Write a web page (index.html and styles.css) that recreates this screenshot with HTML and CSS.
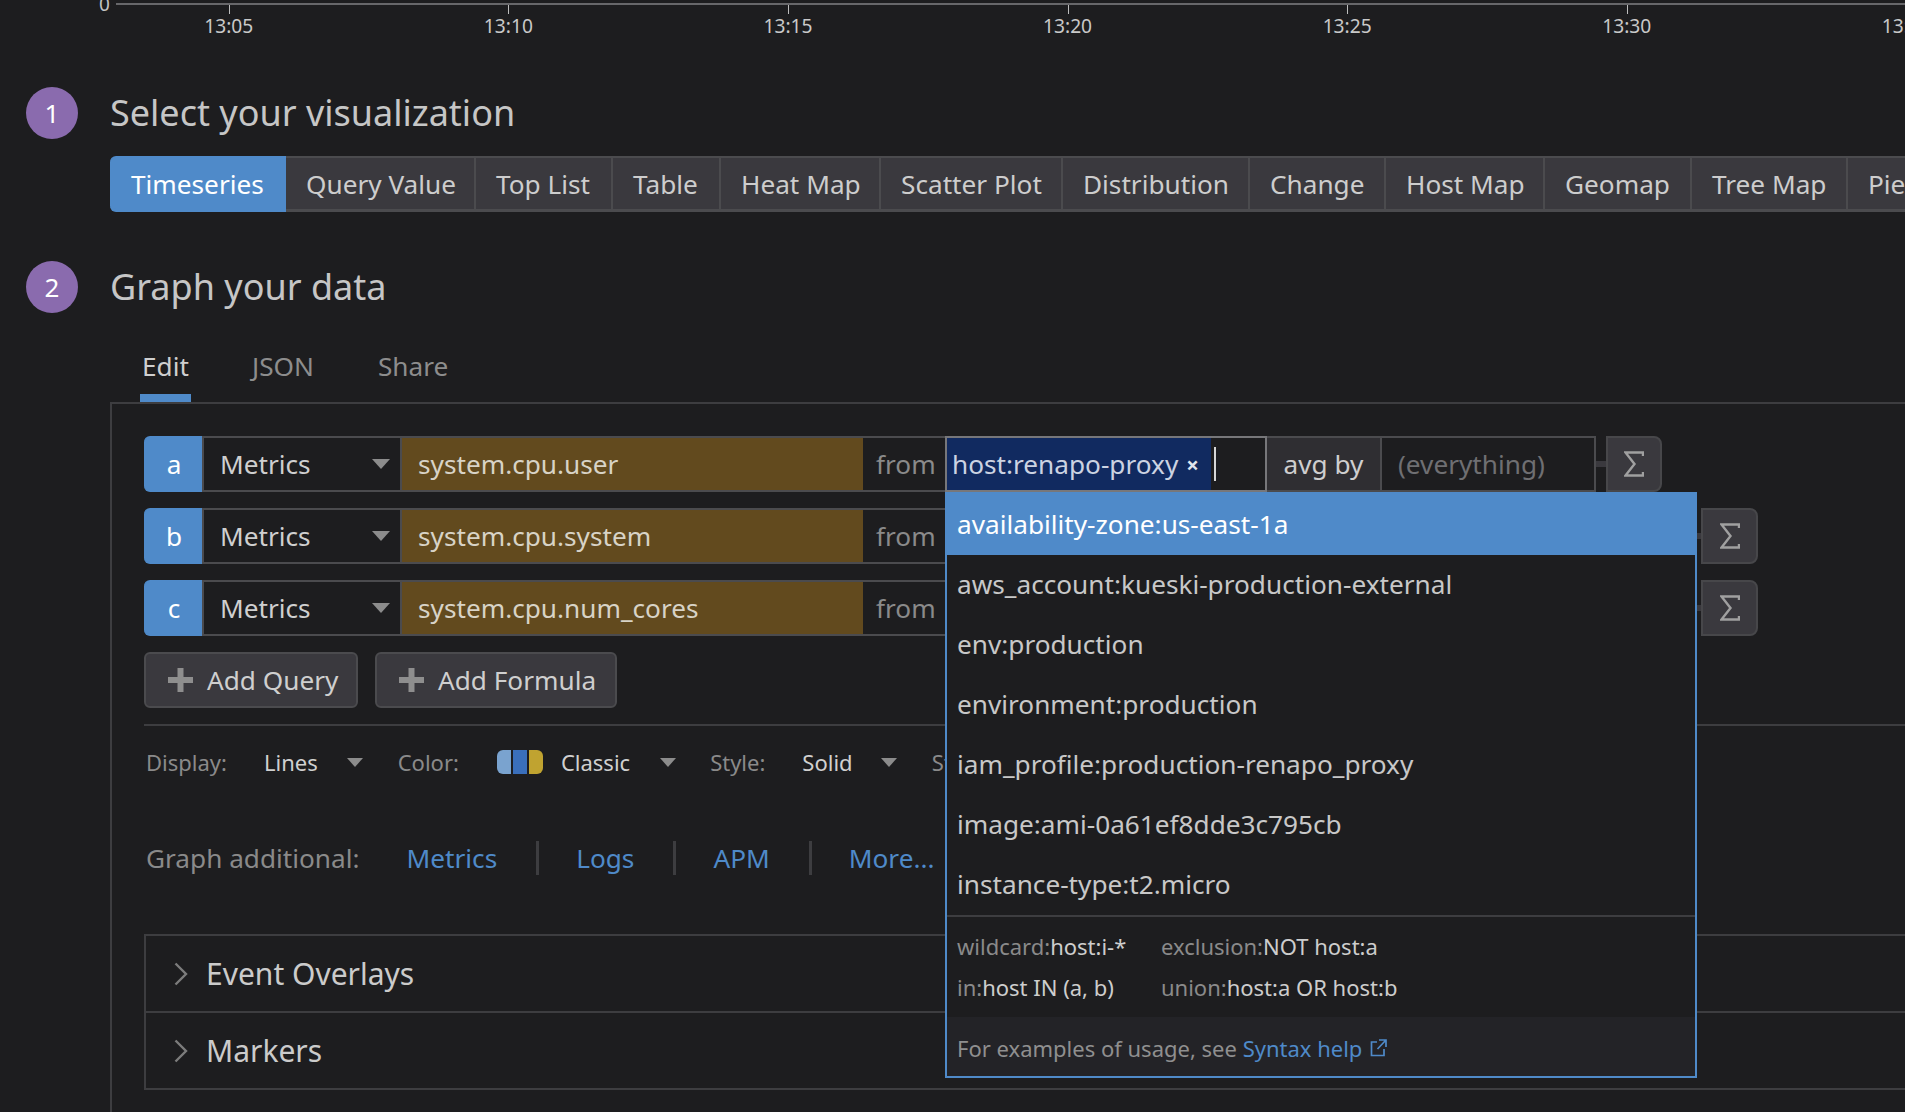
FILE: index.html
```html
<!DOCTYPE html>
<html lang="en">
<head>
<meta charset="utf-8">
<title>Graph editor</title>
<link rel="stylesheet" href="styles.css">
</head>
<body>
<svg class="defs" width="0" height="0" aria-hidden="true">
  <symbol id="sigma" viewBox="0 0 20 26"><path d="M19 5V1.5H1.5L10.5 13L1.5 24.5H19V21" fill="none" stroke="currentColor" stroke-width="2.4"/></symbol>
  <symbol id="plus" viewBox="0 0 25 24"><path d="M9.5 0h6v9h9.500v6h-9.500v9h-6v-9H0V9h9.500z" fill="currentColor"/></symbol>
  <symbol id="chev" viewBox="0 0 14 24"><path d="M1.500 1.500L12 12L1.500 22.500" fill="none" stroke="currentColor" stroke-width="2.400"/></symbol>
  <symbol id="ext" viewBox="0 0 17 18"><path d="M7 3H1.500V16.500H14V10M9 1H16V8M16 1L7.500 10" fill="none" stroke="currentColor" stroke-width="1.700"/></symbol>
</svg>

<div class="axis">
  <span class="axis-zero">0</span>
  <div class="axis-line"></div>
  <div class="ticks">
    <div class="tick">13:05</div>
    <div class="tick">13:10</div>
    <div class="tick">13:15</div>
    <div class="tick">13:20</div>
    <div class="tick">13:25</div>
    <div class="tick">13:30</div>
    <div class="tick">13:35</div>
  </div>
</div>

<section class="step step-viz">
  <div class="step-num">1</div>
  <h2 class="step-title">Select your visualization</h2>
</section>
<div class="viz-tabs">
  <div class="viz-tab viz-active w1">Timeseries</div>
  <div class="viz-tab w2">Query Value</div>
  <div class="viz-tab w3">Top List</div>
  <div class="viz-tab w4">Table</div>
  <div class="viz-tab w5">Heat Map</div>
  <div class="viz-tab w6">Scatter Plot</div>
  <div class="viz-tab w7">Distribution</div>
  <div class="viz-tab w8">Change</div>
  <div class="viz-tab w9">Host Map</div>
  <div class="viz-tab w10">Geomap</div>
  <div class="viz-tab w11">Tree Map</div>
  <div class="viz-tab w12">Pie Chart</div>
</div>

<section class="step step-graph">
  <div class="step-num">2</div>
  <h2 class="step-title">Graph your data</h2>
</section>
<nav class="edit-tabs">
  <div class="edit-tab edit-active">Edit</div>
  <div class="edit-tab">JSON</div>
  <div class="edit-tab edit-share">Share</div>
</nav>

<main class="panel">
  <div class="q-row">
    <div class="q-chip">a</div>
    <div class="q-select">Metrics<i class="caret"></i></div>
    <div class="q-metric">system.cpu.user</div>
    <div class="q-from">from</div>
    <div class="q-filter">
      <span class="tag">host:renapo-proxy<b class="tag-x">×</b></span>
      <span class="cursor"></span>
    </div>
    <div class="q-avg">avg by</div>
    <div class="q-every">(everything)</div>
    <div class="q-link"></div>
    <div class="q-sigma"><svg class="sigma-ic"><use href="#sigma"/></svg></div>
  </div>
  <div class="q-row">
    <div class="q-chip">b</div>
    <div class="q-select">Metrics<i class="caret"></i></div>
    <div class="q-metric">system.cpu.system</div>
    <div class="q-from">from</div>
    <div class="q-hidden"></div>
    <div class="q-link q-link-short"></div>
    <div class="q-sigma q-sigma-wide"><svg class="sigma-ic"><use href="#sigma"/></svg></div>
  </div>
  <div class="q-row">
    <div class="q-chip">c</div>
    <div class="q-select">Metrics<i class="caret"></i></div>
    <div class="q-metric">system.cpu.num_cores</div>
    <div class="q-from">from</div>
    <div class="q-hidden"></div>
    <div class="q-link q-link-short"></div>
    <div class="q-sigma q-sigma-wide"><svg class="sigma-ic"><use href="#sigma"/></svg></div>
  </div>

  <div class="add-row">
    <button class="add-btn add-query"><svg class="plus-ic"><use href="#plus"/></svg>Add Query</button>
    <button class="add-btn add-formula"><svg class="plus-ic"><use href="#plus"/></svg>Add Formula</button>
  </div>

  <div class="display-row">
    <span class="d-label d-display">Display:</span>
    <span class="d-value d-lines">Lines</span><i class="caret caret-sm c-lines"></i>
    <span class="d-label d-color">Color:</span>
    <span class="swatch"><i class="sw1"></i><i class="sw2"></i><i class="sw3"></i></span>
    <span class="d-value d-classic">Classic</span><i class="caret caret-sm c-classic"></i>
    <span class="d-label d-style">Style:</span>
    <span class="d-value d-solid">Solid</span><i class="caret caret-sm c-solid"></i>
    <span class="d-label d-stroke">Stroke:</span>
  </div>

  <div class="additional">
    <span class="add-label">Graph additional:</span>
    <a class="add-link l-metrics">Metrics</a><i class="add-sep"></i>
    <a class="add-link l-logs">Logs</a><i class="add-sep"></i>
    <a class="add-link l-apm">APM</a><i class="add-sep"></i>
    <a class="add-link l-more">More...</a>
  </div>

  <div class="collapse">
    <div class="c-row"><svg class="chev-ic"><use href="#chev"/></svg>Event Overlays</div>
    <div class="c-row"><svg class="chev-ic"><use href="#chev"/></svg>Markers</div>
  </div>

  <div class="dropdown">
    <div class="dd-item dd-active">availability-zone:us-east-1a</div>
    <div class="dd-item">aws_account:kueski-production-external</div>
    <div class="dd-item">env:production</div>
    <div class="dd-item">environment:production</div>
    <div class="dd-item">iam_profile:production-renapo_proxy</div>
    <div class="dd-item">image:ami-0a61ef8dde3c795cb</div>
    <div class="dd-item">instance-type:t2.micro</div>
    <div class="dd-hints">
      <div class="hint"><span>wildcard:</span>host:i-*</div>
      <div class="hint"><span>exclusion:</span>NOT host:a</div>
      <div class="hint"><span>in:</span>host IN (a, b)</div>
      <div class="hint"><span>union:</span>host:a OR host:b</div>
    </div>
    <div class="dd-foot">For examples of usage, see <a class="dd-link">Syntax help</a><svg class="ext-ic"><use href="#ext"/></svg></div>
  </div>
</main>
</body>
</html>
```

FILE: styles.css
```css
* { box-sizing: border-box; }
html, body { margin: 0; width: 1905px; height: 1112px; overflow: hidden; }
body { background: #1d1d1f; color: #cfcfcf; font-family: "Noto Sans", "Open Sans", sans-serif; font-size: 26.200px; }
.defs { position: absolute; }

/* axis */
.axis { position: relative; height: 87px; padding-top: 3px; }
.axis-zero { position: absolute; left: 99px; top: -8px; font-size: 19px; line-height: 24px; color: #c4c4c4; }
.axis-line { margin-left: 116px; height: 2px; background: #67676a; }
.ticks { display: flex; padding-left: 89px; width: 2100px; }
.tick { position: relative; flex: 0 0 279.6px; text-align: center; font-size: 19.200px; line-height: 26px; padding-top: 8px; color: #c9c9c9; }
.tick::before { content: ""; position: absolute; left: 50%; top: 0; width: 1px; height: 9px; background: #bdbdbd; }

/* steps */
.step { display: flex; align-items: center; gap: 32px; padding-left: 26px; height: 52px; }
.step-graph { margin-top: 49px; }
.step-num { width: 52px; height: 52px; border-radius: 50%; background: #8a6bae; color: #fff; display: flex; align-items: center; justify-content: center; font-size: 26px; }
.step-title { margin: 0; padding-bottom: 2px; font-size: 36px; font-weight: 400; color: #c6c6c6; }

/* viz tabs */
.viz-tabs { display: flex; margin: 17px 0 0 110px; width: 1900px; height: 56px; }
.viz-tab { flex: none; background: #3a393e; border: solid #4b4b4e; border-width: 2px 2px 3px 0; display: flex; align-items: center; padding-left: 20px; color: #cdcdcd; white-space: nowrap; }
.viz-active { background: #4f8ac9; border-color: #4f8ac9; border-radius: 6px 0 0 6px; color: #fff; padding-left: 21px; }
.w1 { width: 176px; } .w2 { width: 190px; } .w3 { width: 137px; } .w4 { width: 108px; } .w5 { width: 160px; } .w6 { width: 182px; }
.w7 { width: 187px; } .w8 { width: 136px; } .w9 { width: 159px; } .w10 { width: 147px; } .w11 { width: 156px; } .w12 { width: 160px; }

/* edit tabs */
.edit-tabs { display: flex; gap: 61px; margin: 26px 0 0 140px; height: 63px; }
.edit-tab { flex: none; min-width: 51px; padding-top: 9px; height: 62px; text-align: center; color: #8d8d8d; white-space: nowrap; }
.edit-active { color: #cfcfcf; border-bottom: 8px solid #4f8ac9; height: 63px; }
.edit-share { margin-left: 3px; }

/* panel */
.panel { position: relative; margin-left: 110px; width: 1900px; height: 720px; border: solid #3d3d40; border-width: 2px 0 0 2px; padding: 32px 0 0 32px; }

.q-row { display: flex; height: 56px; margin-bottom: 16px; }
.q-row > div { flex: none; display: flex; align-items: center; white-space: nowrap; border: solid #4b4b4e; border-width: 2px 0; }
.q-chip { width: 58px; justify-content: center; padding-left: 2px; background: #4f8ac9; border-color: #4f8ac9 !important; border-radius: 6px 0 0 6px; color: #fff; }
.q-select { position: relative; width: 200px; padding-left: 16px; border-left-width: 2px !important; border-right-width: 2px !important; }
.caret { position: absolute; right: 10px; top: 50%; margin-top: -5px; width: 0; height: 0; border: solid transparent; border-width: 10px 9px 0; border-top-color: #8c8c8c; }
.q-metric { width: 461px; padding-left: 16px; background: #624a1e; color: #d8d3c6; }
.q-from { width: 82px; padding-left: 13px; color: #8a8a8a; }
.q-filter { width: 322px; border: 2px solid #77777a !important; padding: 0; gap: 4px; }
.tag { display: flex; align-items: center; align-self: stretch; width: 264px; padding-left: 5px; background: #112a60; color: #ccd3e2; }
.tag-x { font-weight: 700; font-size: 22px; margin-left: 8px; color: #e0e4ee; }
.cursor { width: 2px; height: 34px; background: #d6d6d6; margin-left: -1px; }
.q-avg { width: 113px; justify-content: center; background: #2f2e32; border-left: 0 !important; color: #cfcfcf; }
.q-every { width: 216px; padding-left: 16px; border-left-width: 2px !important; border-right-width: 2px !important; color: #6f6f72; }
.q-link { width: 10px; border: 0 !important; position: relative; }
.q-link::before { content: ""; display: block; width: 100%; height: 6px; background: #3a393e; }
.q-hidden { width: 751px; }
.q-link-short { width: 5px; }
.q-sigma { width: 56px; justify-content: center; background: #3a393e; border: 2px solid #47474a !important; border-radius: 0 8px 8px 0; color: #a0a0a0; }
.q-sigma-wide { width: 57px; }
.sigma-ic { width: 20px; height: 26px; }

/* add buttons */
.add-row { display: flex; gap: 17px; height: 56px; }
.add-btn { display: flex; align-items: center; background: #3a393e; border: 2px solid #4b4b4e; border-radius: 6px; color: #cfcfcf; font: inherit; padding: 0 0 0 22px; gap: 14px; }
.add-query { width: 214px; }
.add-formula { width: 242px; }
.plus-ic { width: 25px; height: 24px; color: #8e8e8e; }

/* display row */
.display-row { display: flex; align-items: center; margin-top: 16px; padding: 0 0 2px 2px; border-top: 2px solid #3d3d40; height: 76px; font-size: 22px; position: relative; }
.d-label { color: #8a8a8a; flex: none; }
.d-value { color: #d0d0d0; flex: none; }
.caret-sm { position: static; margin: 0; flex: none; border-width: 9px 8px 0; }
.d-lines { margin-left: 37px; }
.c-lines { margin-left: 29px; }
.d-color { margin-left: 35px; }
.swatch { display: flex; gap: 2px; margin-left: 38px; width: 46px; height: 24px; border-radius: 6px; overflow: hidden; flex: none; }
.swatch i { flex: 1; }
.sw1 { background: #7aa3cf; } .sw2 { background: #3a6fbb; } .sw3 { background: #c0a330; }
.d-classic { margin-left: 18px; }
.c-classic { margin-left: 30px; }
.d-style { margin-left: 34px; }
.d-solid { margin-left: 37px; }
.c-solid { margin-left: 28px; }
.d-stroke { margin-left: 35px; }

/* additional */
.additional { display: flex; align-items: center; margin-top: 40px; height: 36px; padding-left: 2px; color: #8a8a8a; }
.add-label { flex: none; }
.add-link { color: #4f8ac9; flex: none; }
.l-metrics { margin-left: 47px; }
.add-sep { flex: none; width: 3px; height: 34px; background: #3d3d40; margin-left: 39px; }
.l-logs, .l-apm, .l-more { margin-left: 37px; }

/* collapse */
.collapse { margin-top: 58px; border: solid #3d3d40; border-width: 2px 0 0 2px; }
.c-row { display: flex; align-items: center; height: 77px; border-bottom: 2px solid #3d3d40; font-size: 30px; padding-left: 28px; color: #cbcbcb; }
.chev-ic { width: 14px; height: 24px; margin-right: 18px; color: #7c7c7c; }

/* dropdown */
.dropdown { position: absolute; left: 833px; top: 88px; width: 752px; height: 586px; border: 2px solid #4f8ac9; background: #1d1d1f; }
.dd-item { height: 60px; display: flex; align-items: center; padding: 0 0 2px 10px; color: #c8c8c8; }
.dd-active { height: 61px; background: #4f8ac9; color: #fff; }
.dd-hints { display: grid; grid-template-columns: 204px 1fr; grid-auto-rows: 41px; align-items: center; border-top: 2px solid #3d3d40; padding: 8px 0 0 10px; height: 102px; font-size: 22px; color: #cdcdcd; }
.hint span { color: #8a8a8a; }
.dd-foot { display: flex; align-items: center; height: 59px; background: #232327; padding: 3px 0 0 10px; font-size: 22px; color: #8f8f8f; white-space: pre; }
.dd-link { color: #4f8ac9; }
.ext-ic { width: 17px; height: 18px; margin-left: 8px; color: #4f8ac9; }
```
